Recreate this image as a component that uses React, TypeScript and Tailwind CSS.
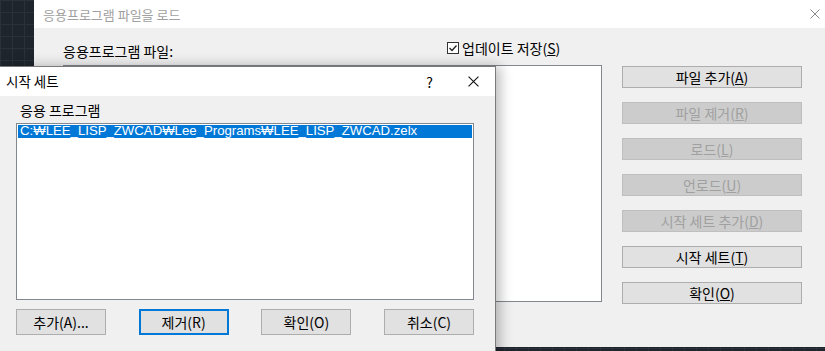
import React from "react";

const KR = "font-['Noto_Sans_CJK_KR','Noto_Sans',sans-serif]";

function CloseX({ color, size = 10 }: { color: string; size?: number }) {
  return (
    <svg width={size} height={size} viewBox="0 0 10 10">
      <path d="M0.5 0.5 L9.5 9.5 M9.5 0.5 L0.5 9.5" stroke={color} strokeWidth="1" fill="none" />
    </svg>
  );
}

function SideBtn({ children, disabled }: { children: React.ReactNode; disabled?: boolean }) {
  return (
    <div
      className={
        "h-[22px] w-[180px] flex items-center justify-center border text-[14px] leading-none " +
        (disabled
          ? "bg-[#cccccc] border-[#bfbfbf] text-[#a0a0a0]"
          : "bg-[#e1e1e1] border-[#adadad] text-[#000000]")
      }
    >
      {children}
    </div>
  );
}

function BottomBtn({ children, focused }: { children: React.ReactNode; focused?: boolean }) {
  return (
    <div
      className={
        "h-[26px] w-[90px] flex items-center justify-center bg-[#e1e1e1] text-[14px] leading-none text-black " +
        (focused ? "border-2 border-[#0078d7]" : "border border-[#adadad]")
      }
    >
      {children}
    </div>
  );
}

export default function App() {
  return (
    <div
      className={
        "relative w-[825px] h-[351px] overflow-hidden bg-[#1f252d] bg-[linear-gradient(to_right,#2a313b_1px,transparent_1px),linear-gradient(to_bottom,#2a313b_1px,transparent_1px)] bg-[size:12px_12px] " +
        KR
      }
    >
      {/* Back dialog */}
      <div className="absolute left-[34px] top-0 w-[800px] h-[347px] flex flex-col bg-[#f0f0f0]">
        <div className="h-[28px] bg-white flex items-center justify-between pl-[9px] pr-[9px] shrink-0">
          <span className="text-[13px] text-[#a0a0a0] leading-none">응용프로그램 파일을 로드</span>
          <div className="mr-[5px]">
            <CloseX color="#8a8a8a" />
          </div>
        </div>
        <div className="flex pl-[29px] pt-[9px] gap-[20px]">
          <div className="flex flex-col w-[539px]">
            <div className="h-[28px] flex items-center text-[14px] leading-none text-black">
              <span className="w-[384px]">응용프로그램 파일:</span>
              <span className="flex items-center gap-[3px] -mt-[6px]">
                <svg width="12" height="12" viewBox="0 0 12 12">
                  <rect x="0.5" y="0.5" width="11" height="11" fill="white" stroke="#333" />
                  <path d="M2.5 6 L5 8.5 L9.5 3.5" stroke="#222" strokeWidth="1.3" fill="none" />
                </svg>
                <span>
                  업데이트 저장(<span className="underline">S</span>)
                </span>
              </span>
            </div>
            <div className="h-[237px] bg-white border border-[#828790]" />
          </div>
          <div className="flex flex-col gap-[14px] pt-[29px]">
            <SideBtn>
              파일 추가(<span className="underline">A</span>)
            </SideBtn>
            <SideBtn disabled>
              파일 제거(<span className="underline">R</span>)
            </SideBtn>
            <SideBtn disabled>
              로드(<span className="underline">L</span>)
            </SideBtn>
            <SideBtn disabled>
              언로드(<span className="underline">U</span>)
            </SideBtn>
            <SideBtn disabled>
              시작 세트 추가(<span className="underline">D</span>)
            </SideBtn>
            <SideBtn>
              시작 세트(<span className="underline">T</span>)
            </SideBtn>
            <SideBtn>
              확인(<span className="underline">O</span>)
            </SideBtn>
          </div>
        </div>
      </div>

      {/* Front dialog */}
      <div className="absolute left-0 top-[66px] w-[496px] h-[300px] flex flex-col bg-[#f0f0f0] border-t border-r border-[#7a7a7a] shadow-[4px_0_12px_rgba(0,0,0,0.28)]">
        <div className="h-[29px] bg-white flex items-center pl-[6px] shrink-0">
          <span className="text-[13.5px] leading-none text-black">시작 세트</span>
          <span className="ml-auto text-[14px] leading-none text-black mr-[35px]">?</span>
          <div className="mr-[16px]">
            <CloseX color="#111" size={11} />
          </div>
        </div>
        <div className="flex flex-col pl-[16px] pr-[21px]">
          <div className="h-[27px] flex items-center pl-[4px] text-[14px] leading-none text-black">응용 프로그램</div>
          <div className="h-[177px] w-[458px] bg-white border border-[#828790] p-[1px]">
            <div className="h-[13px] bg-[#0078d7] text-white text-[13.2px] leading-[11px] pl-[2px] whitespace-nowrap font-['Liberation_Sans',sans-serif]">
              C:₩LEE_LISP_ZWCAD₩Lee_Programs₩LEE_LISP_ZWCAD.zelx
            </div>
          </div>
          <div className="flex justify-between w-[458px] mt-[9px]">
            <BottomBtn>추가(A)...</BottomBtn>
            <BottomBtn focused>제거(R)</BottomBtn>
            <BottomBtn>확인(O)</BottomBtn>
            <BottomBtn>취소(C)</BottomBtn>
          </div>
        </div>
      </div>
    </div>
  );
}
